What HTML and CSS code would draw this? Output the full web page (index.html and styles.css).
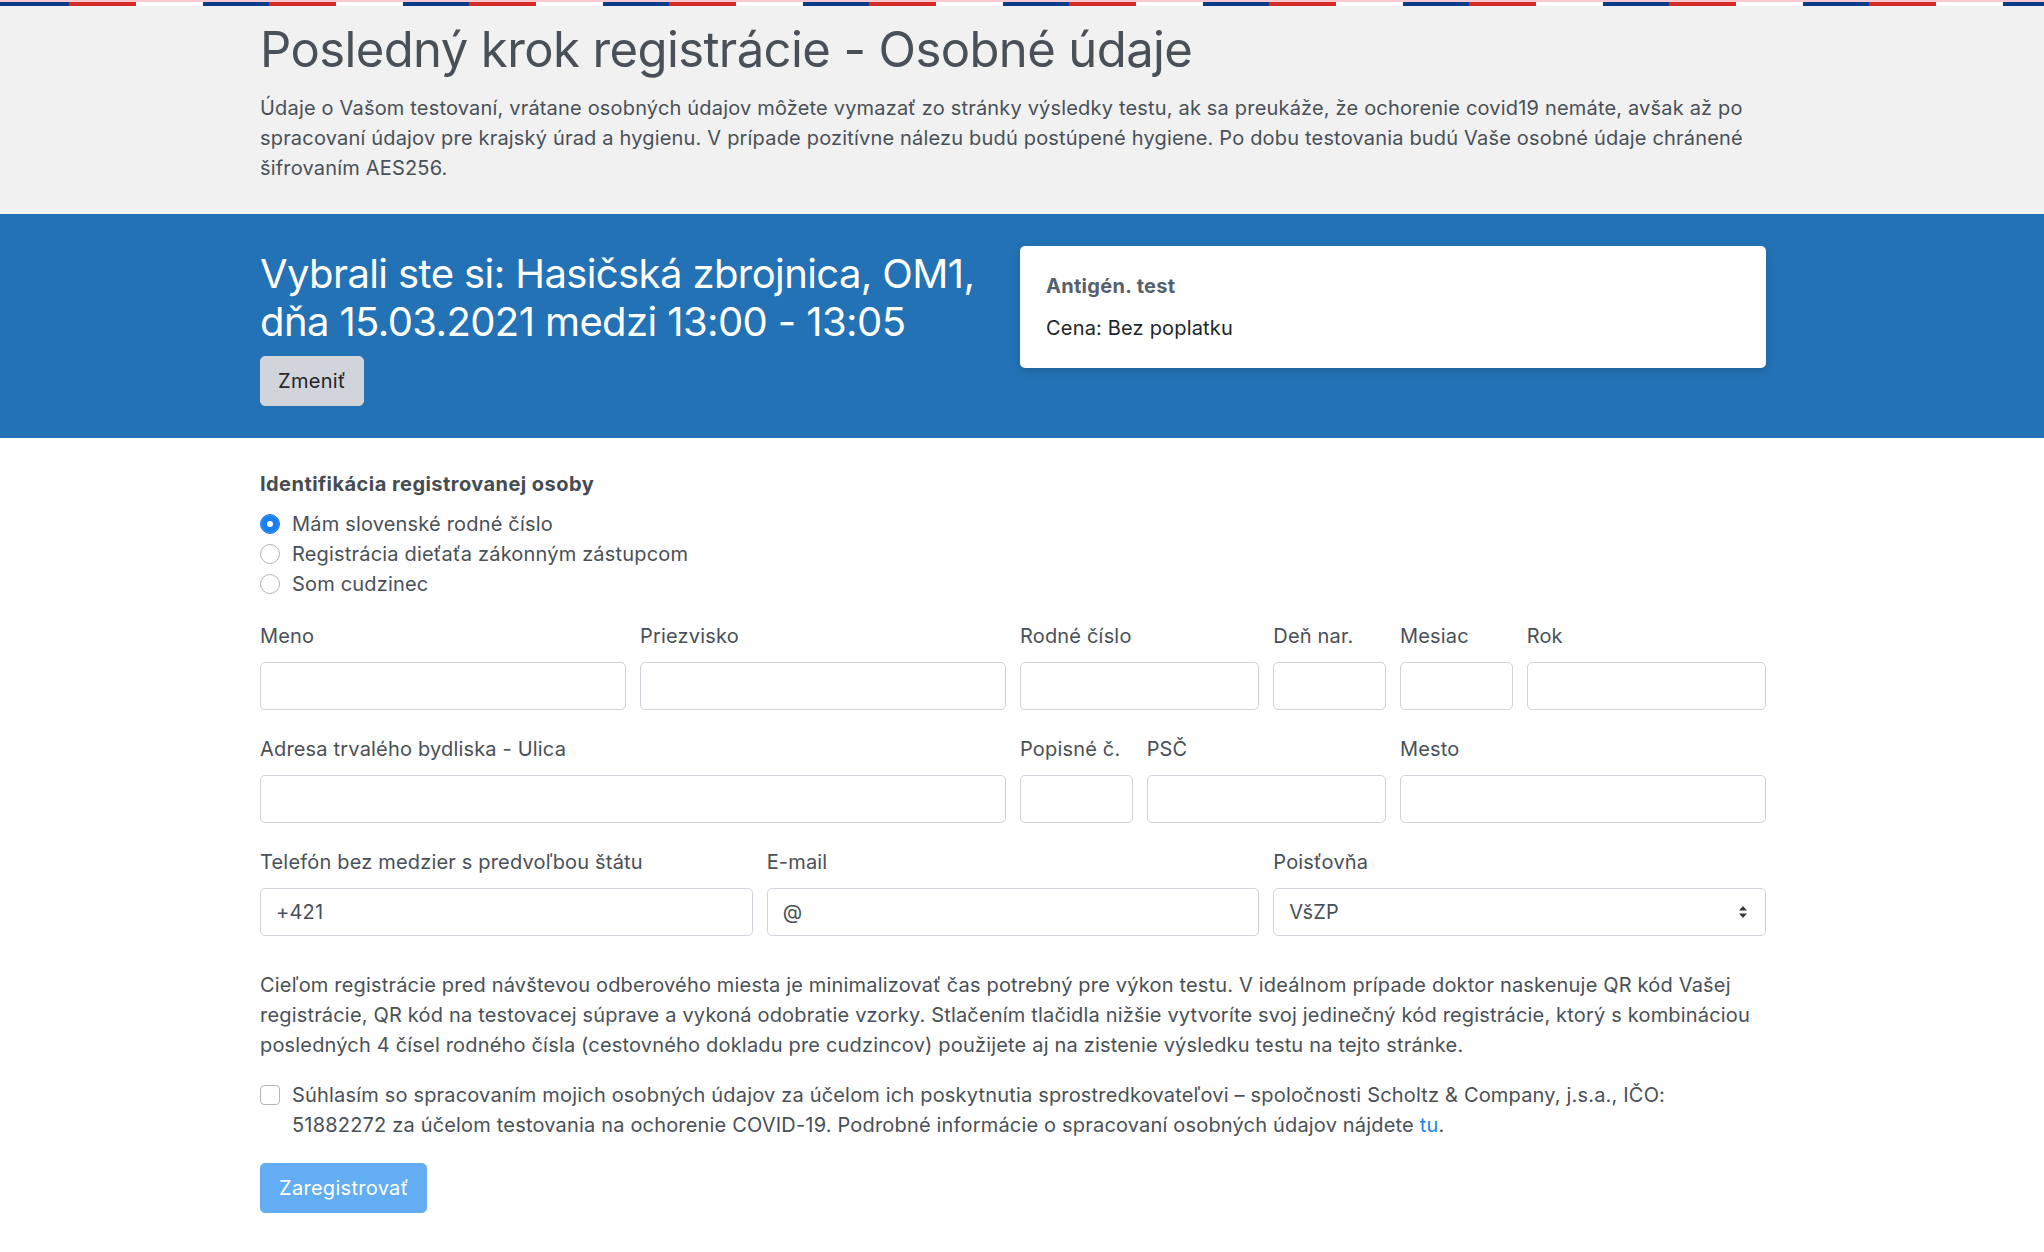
FILE: index.html
```html
<!DOCTYPE html>
<html lang="sk">
<head>
<meta charset="utf-8">
<title>Registrácia - Osobné údaje</title>
<link rel="stylesheet" href="styles.css">
</head>
<body>
<div class="flag-stripe"></div>
<header class="intro">
  <div class="container">
    <h1 class="intro-title">Posledný krok registrácie - Osobné údaje</h1>
    <p class="intro-text">Údaje o Vašom testovaní, vrátane osobných údajov môžete vymazať zo stránky výsledky testu, ak sa preukáže, že ochorenie covid19 nemáte, avšak až po spracovaní údajov pre krajský úrad a hygienu. V prípade pozitívne nálezu budú postúpené hygiene. Po dobu testovania budú Vaše osobné údaje chránené šifrovaním AES256.</p>
  </div>
</header>
<section class="selection">
  <div class="container grid">
    <div class="col-6 selection-info">
      <h2 class="selection-title">Vybrali ste si: Hasičská zbrojnica, OM1, dňa 15.03.2021 medzi 13:00 - 13:05</h2>
      <button class="btn btn-light" type="button">Zmeniť</button>
    </div>
    <div class="col-6">
      <div class="card">
        <div class="card-title">Antigén. test</div>
        <div class="card-text">Cena: Bez poplatku</div>
      </div>
    </div>
  </div>
</section>
<main class="form-section">
  <div class="container">
    <div class="group-label">Identifikácia registrovanej osoby</div>
    <div class="radios">
      <label class="radio"><span class="radio-mark checked"></span>Mám slovenské rodné číslo</label>
      <label class="radio"><span class="radio-mark"></span>Registrácia dieťaťa zákonným zástupcom</label>
      <label class="radio"><span class="radio-mark"></span>Som cudzinec</label>
    </div>

    <div class="grid form-row">
      <div class="col-3 field"><label>Meno</label><input class="input" type="text"></div>
      <div class="col-3 field"><label>Priezvisko</label><input class="input" type="text"></div>
      <div class="col-2 field"><label>Rodné číslo</label><input class="input" type="text"></div>
      <div class="col-1 field"><label>Deň nar.</label><input class="input" type="text"></div>
      <div class="col-1 field"><label>Mesiac</label><input class="input" type="text"></div>
      <div class="col-2 field"><label>Rok</label><input class="input" type="text"></div>
    </div>

    <div class="grid form-row">
      <div class="col-6 field"><label>Adresa trvalého bydliska - Ulica</label><input class="input" type="text"></div>
      <div class="col-1 field"><label>Popisné č.</label><input class="input" type="text"></div>
      <div class="col-2 field"><label>PSČ</label><input class="input" type="text"></div>
      <div class="col-3 field"><label>Mesto</label><input class="input" type="text"></div>
    </div>

    <div class="grid form-row">
      <div class="col-4 field"><label>Telefón bez medzier s predvoľbou štátu</label><input class="input" type="text" value="+421"></div>
      <div class="col-4 field"><label>E-mail</label><input class="input" type="text" value="@"></div>
      <div class="col-4 field"><label>Poisťovňa</label>
        <div class="select-wrap">
          <select class="input select"><option>VšZP</option><option>Dôvera</option><option>Union</option></select>
          <svg class="select-arrows" width="10" height="14" viewBox="0 0 10 14"><path d="M5 1 L9 5.5 H1 Z M5 13 L1 8.5 H9 Z" fill="#343a40"/></svg>
        </div>
      </div>
    </div>

    <p class="note">Cieľom registrácie pred návštevou odberového miesta je minimalizovať čas potrebný pre výkon testu. V ideálnom prípade doktor naskenuje QR kód Vašej registrácie, QR kód na testovacej súprave a vykoná odobratie vzorky. Stlačením tlačidla nižšie vytvoríte svoj jedinečný kód registrácie, ktorý s kombináciou posledných 4 čísel rodného čísla (cestovného dokladu pre cudzincov) použijete aj na zistenie výsledku testu na tejto stránke.</p>

    <label class="consent"><span class="check-mark"></span><span>Súhlasím so spracovaním mojich osobných údajov za účelom ich poskytnutia sprostredkovateľovi – spoločnosti Scholtz &amp; Company, j.s.a., IČO: 51882272 za účelom testovania na ochorenie COVID-19. Podrobné informácie o spracovaní osobných údajov nájdete <a href="#">tu</a>.</span></label>

    <button class="btn btn-primary" type="button" disabled>Zaregistrovať</button>
  </div>
</main>
</body>
</html>
```
FILE: styles.css
```css
* { box-sizing: border-box; }
html, body { margin: 0; padding: 0; }
body {
  font-family: Inter, "Noto Sans", "Liberation Sans", sans-serif;
  font-size: 20px;
  line-height: 30px;
  letter-spacing: 0.18px;
  color: #495057;
  background: #fff;
}
.flag-stripe {
  height: 6px;
  border-top: 2px solid #f9c9d1;
  background-color: #f1f1f1;
  background-image: repeating-linear-gradient(90deg, #0b3b87 0 66px, #d52a26 66px 133px, #ffffff 133px 200px);
  background-position: 3px 0;
}
.container {
  width: 1506px;
  margin-left: 260px;
}
.grid {
  display: grid;
  grid-template-columns: repeat(12, 1fr);
  column-gap: 14px;
}
.col-1 { grid-column: span 1; }
.col-2 { grid-column: span 2; }
.col-3 { grid-column: span 3; }
.col-4 { grid-column: span 4; }
.col-6 { grid-column: span 6; }

.intro {
  background: #f1f1f1;
  padding: 14px 0 11px;
}
.intro-title {
  margin: 0 0 13px;
  font-size: 49px;
  line-height: 60px;
  font-weight: 400;
  color: #495057;
  letter-spacing: -0.6px;
}
.intro-text {
  margin: 0 0 20px;
}

.selection {
  background: #2372b5;
  padding: 32px 0 32px;
}
.selection-title {
  margin: 4px 0 10px;
  font-size: 40px;
  line-height: 48px;
  font-weight: 400;
  color: #fff;
  letter-spacing: -0.6px;
}
.btn {
  font-family: inherit;
  font-size: 20px;
  line-height: 30px;
  letter-spacing: 0.3px;
  padding: 9px 17px;
  border-radius: 5px;
  border: 1px solid transparent;
  cursor: pointer;
}
.btn-light {
  background: #d1d5db;
  border-color: #d1d5db;
  color: #212529;
}
.card {
  background: #fff;
  border-radius: 5px;
  padding: 25px 26px;
  box-shadow: 0 3px 10px rgba(0, 0, 0, 0.15);
}
.card-title {
  font-weight: 700;
  color: #56606d;
  margin-bottom: 12px;
  letter-spacing: 0.3px;
}
.card-text {
  color: #212529;
}

.form-section {
  padding: 31px 0 40px;
}
.group-label {
  font-weight: 700;
  color: #454b52;
  margin-bottom: 10px;
  letter-spacing: 0.45px;
}
.radios {
  display: flex;
  flex-direction: column;
  margin-bottom: 22px;
}
.radio {
  display: flex;
  align-items: center;
  gap: 12px;
}
.radio-mark {
  width: 20px;
  height: 20px;
  border-radius: 50%;
  border: 1.5px solid #adb5bd;
  background: #fff;
  flex: none;
}
.radio-mark.checked {
  border-color: #1b7fee;
  background: #1b7fee;
  box-shadow: inset 0 0 0 6px #1b7fee, inset 0 0 0 10px #fff;
}
.form-row {
  margin-bottom: 24px;
}
.field label {
  display: block;
  margin-bottom: 11px;
}
.input {
  display: block;
  width: 100%;
  height: 48px;
  padding: 8px 15px;
  font-family: inherit;
  font-size: 20px;
  line-height: 30px;
  letter-spacing: 0.18px;
  color: #495057;
  background: #fff;
  border: 1px solid #ced4da;
  border-radius: 5px;
}
.select-wrap {
  position: relative;
}
.select {
  appearance: none;
  -webkit-appearance: none;
}
.select-arrows {
  position: absolute;
  right: 18px;
  top: 17px;
  pointer-events: none;
}
.note {
  margin: 34px 0 20px;
}
.consent {
  display: flex;
  align-items: flex-start;
  gap: 12px;
  padding-right: 30px;
  margin-bottom: 23px;
}
.check-mark {
  width: 20px;
  height: 20px;
  margin-top: 5px;
  border-radius: 4px;
  border: 1.5px solid #adb5bd;
  background: #fff;
  flex: none;
}
.consent a {
  color: #1d84ef;
  text-decoration: none;
}
.btn-primary {
  background: #63adf2;
  border-color: #63adf2;
  color: #fff;
  cursor: default;
  padding: 9px 18px;
}
```
